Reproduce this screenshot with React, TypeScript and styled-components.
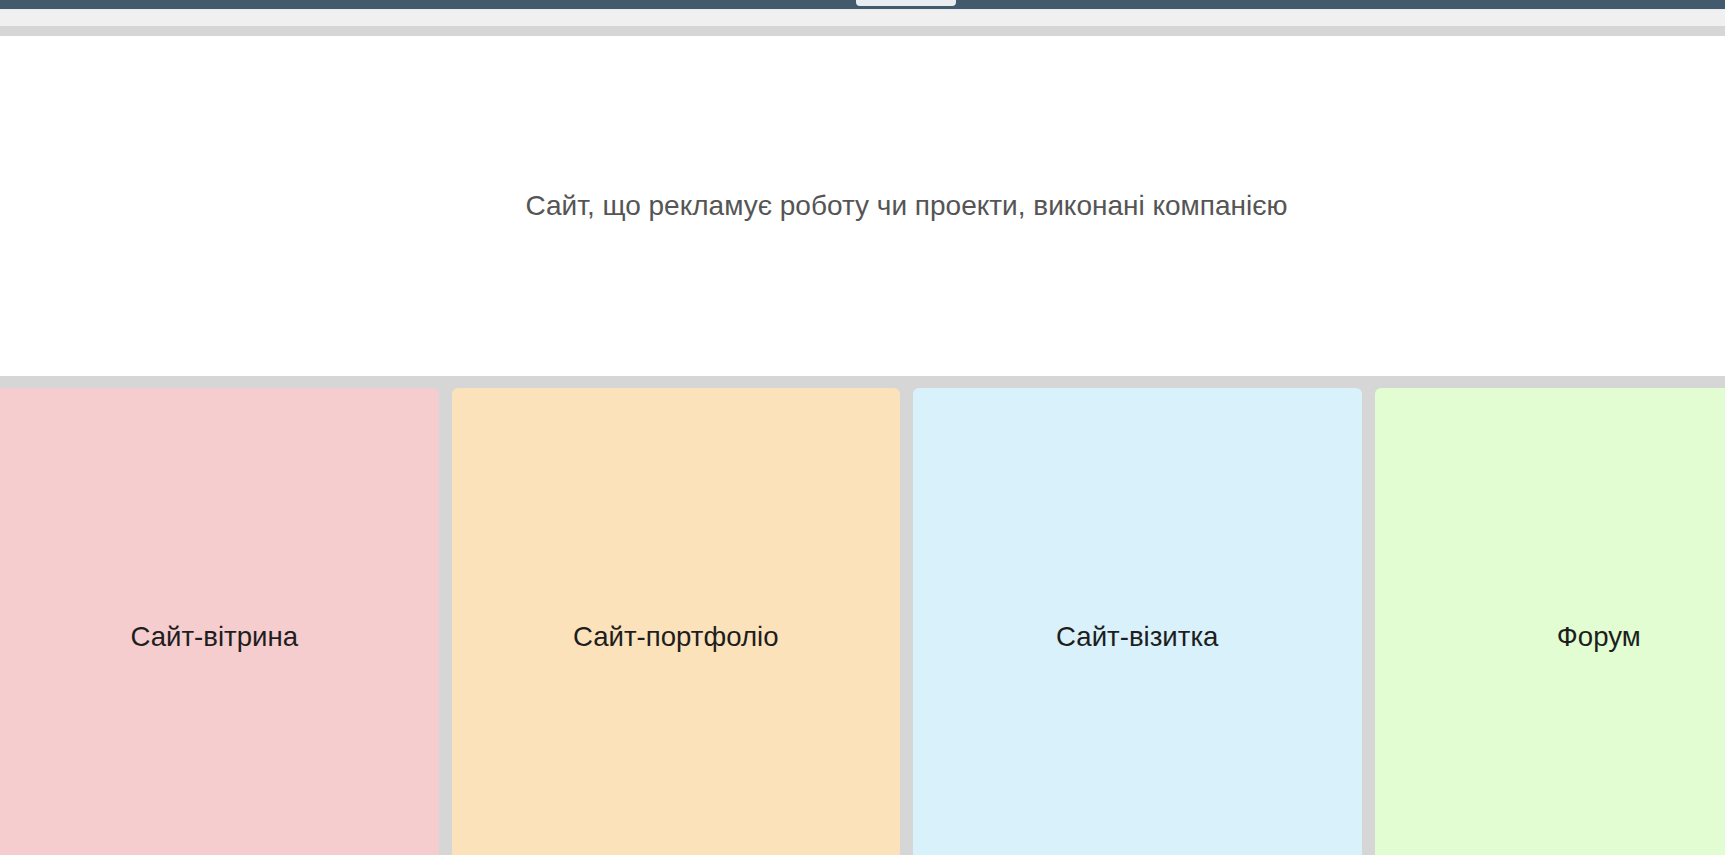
import React from "react";
import styled, { createGlobalStyle } from "styled-components";

const GlobalStyle = createGlobalStyle`
  html, body {
    margin: 0;
    padding: 0;
    background: #d6d6d6;
    overflow: hidden;
    font-family: "Liberation Sans", Arial, sans-serif;
  }
  #root {
    width: 1725px;
    height: 855px;
    overflow: hidden;
  }
`;

const Page = styled.div`
  display: flex;
  flex-direction: column;
  width: 1725px;
  height: 855px;
  overflow: hidden;
`;

const TopBar = styled.div`
  display: flex;
  align-items: flex-start;
  height: 9px;
  padding-left: 856px;
  background: #435a6d;
  flex-shrink: 0;
`;

const Handle = styled.div`
  width: 100px;
  height: 6px;
  background: #e8edf2;
  border-radius: 0 0 4px 4px;
`;

const SubBar = styled.div`
  height: 16px;
  background: #f0f0f0;
  border-top: 1px solid #e4ebf3;
  flex-shrink: 0;
`;

const Divider = styled.div`
  height: 10px;
  background: #d6d6d6;
  flex-shrink: 0;
`;

const Hero = styled.section`
  display: flex;
  align-items: center;
  justify-content: center;
  height: 340px;
  padding-left: 88px;
  background: #ffffff;
  flex-shrink: 0;
`;

const HeroText = styled.p`
  margin: 0;
  font-family: "Liberation Sans", Arial, sans-serif;
  font-size: 28px;
  color: #555555;
`;

const Strip = styled.div`
  display: flex;
  gap: 13px;
  padding-top: 12px;
  margin-left: -10px;
  background: #d6d6d6;
  flex-shrink: 0;
`;

const Card = styled.div<{ $bg: string }>`
  display: flex;
  align-items: center;
  justify-content: center;
  flex: 0 0 448.5px;
  height: 498px;
  background: ${(p) => p.$bg};
  border-radius: 6px 6px 0 0;
`;

const CardTitle = styled.span`
  font-family: "Liberation Sans", Arial, sans-serif;
  font-size: 27.6px;
  color: #1e1e1e;
`;

const cards = [
  { title: "Сайт-вітрина", bg: "#f6cdcf" },
  { title: "Сайт-портфоліо", bg: "#fbe2bb" },
  { title: "Сайт-візитка", bg: "#d9f1fb" },
  { title: "Форум", bg: "#e1fdd1" },
];

export default function App() {
  return (
    <Page>
      <GlobalStyle />
      <TopBar>
        <Handle />
      </TopBar>
      <SubBar />
      <Divider />
      <Hero>
        <HeroText>Сайт, що рекламує роботу чи проекти, виконані компанією</HeroText>
      </Hero>
      <Strip>
        {cards.map((c) => (
          <Card key={c.title} $bg={c.bg}>
            <CardTitle>{c.title}</CardTitle>
          </Card>
        ))}
      </Strip>
    </Page>
  );
}
